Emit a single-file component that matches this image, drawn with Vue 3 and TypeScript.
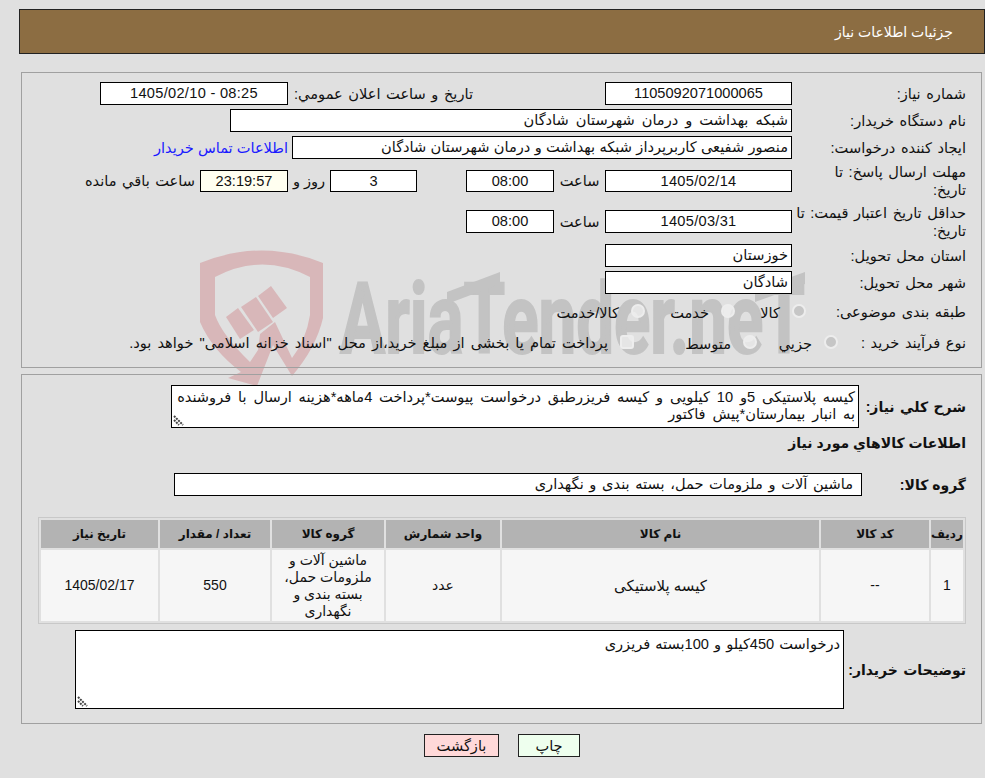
<script setup lang="ts">
const columns: string[] = ['ردیف', 'کد کالا', 'نام کالا', 'واحد شمارش', 'گروه کالا', 'تعداد / مقدار', 'تاریخ نیاز']
</script>

<template>
  <div class="page" dir="rtl">
    <svg class="watermark" width="985" height="778" viewBox="0 0 985 778" aria-hidden="true">
      <path class="shield" fill-rule="evenodd" d="M200 263Q262 238 323 263L323 318Q316 348 292 376L273 345L257 386L228 378L241 372Q212 350 200 322ZM215 277L215 315Q222 335 250 362L258 350L260 334L275 322L292 358Q306 340 310 315L310 277Q262 252 215 277Z" />
      <polygon class="shield" points="226,317 238,308 254,330 240,339" />
      <polygon class="shield" points="241,307 256,297 273,322 258,332" />
      <polygon class="shield" points="258,296 271,286 287,308 273,318" />
      <text class="logo" x="340" y="353" textLength="465" lengthAdjust="spacingAndGlyphs">AriaTender.neT</text>
      <polygon class="logo-bar" points="447,292 500,272 500,284 447,304" />
      <polygon class="logo-bar" points="755,290 805,272 805,284 755,302" />
    </svg>

    <header class="title-bar">جزئیات اطلاعات نیاز</header>

    <section class="panel main-panel">
      <div class="row h23">
        <div class="label">شماره نیاز:</div>
        <div class="box w187 center">1105092071000065</div>
        <div class="sub-label">تاریخ و ساعت اعلان عمومي:</div>
        <div class="box w188 center date">08:25 - 1405/02/10</div>
      </div>
      <div class="row h23">
        <div class="label">نام دستگاه خریدار:</div>
        <div class="box w562 spaced">شبکه بهداشت و درمان شهرستان شادگان</div>
      </div>
      <div class="row h23">
        <div class="label">ایجاد کننده درخواست:</div>
        <div class="box w500 tight">منصور شفیعی کاربرپرداز شبکه بهداشت و درمان شهرستان شادگان</div>
        <a class="contact">اطلاعات تماس خریدار</a>
      </div>
      <div class="row h36">
        <div class="label">مهلت ارسال پاسخ: تا<br />تاریخ:</div>
        <div class="box w187 center short date">1405/02/14</div>
        <div class="mid w51">ساعت</div>
        <div class="box w88 center short">08:00</div>
        <div class="box w87 center short days">3</div>
        <div class="mid w42">روز و</div>
        <div class="box w88 center short timer">23:19:57</div>
        <div class="remain">ساعت باقي مانده</div>
      </div>
      <div class="row h37">
        <div class="label">حداقل تاریخ اعتبار قیمت: تا<br />تاریخ:</div>
        <div class="box w187 center date">1405/03/31</div>
        <div class="mid w51">ساعت</div>
        <div class="box w88 center">08:00</div>
      </div>
      <div class="row h23">
        <div class="label">استان محل تحویل:</div>
        <div class="box w187">خوزستان</div>
      </div>
      <div class="row h23">
        <div class="label">شهر محل تحویل:</div>
        <div class="box w187">شادگان</div>
      </div>
      <div class="row h26 options">
        <div class="label w160">طبقه بندی موضوعی:</div>
        <input class="mark" type="radio" name="kind" checked disabled />
        <span class="opt w45">کالا</span>
        <input class="mark" type="radio" name="kind" disabled />
        <span class="opt w51b">خدمت</span>
        <input class="mark" type="radio" name="kind" disabled />
        <span class="opt">کالا/خدمت</span>
      </div>
      <div class="row h26 options">
        <div class="label w128">نوع فرآیند خرید :</div>
        <input class="mark" type="radio" name="proc" checked disabled />
        <span class="opt w47">جزیي</span>
        <input class="mark" type="radio" name="proc" disabled />
        <span class="opt w86">متوسط</span>
        <input class="mark square" type="checkbox" disabled />
        <span class="opt long">پرداخت تمام یا بخشی از مبلغ خرید،از محل "اسناد خزانه اسلامی" خواهد بود.</span>
      </div>
    </section>

    <section class="panel second-panel">
      <div class="desc-row">
        <div class="bold-label desc-label">شرح كلي نياز:</div>
        <div class="area desc-area">
          کیسه پلاستیکی 5و 10 کیلویی و کیسه فریزرطبق درخواست پیوست*پرداخت 4ماهه*هزینه ارسال با فروشنده<br />به انبار بیمارستان*پیش فاکتور
          <svg class="grip" width="11" height="11" viewBox="0 0 11 11" aria-hidden="true"><path d="M1 1L10 10M1 5L6 10" /></svg>
        </div>
      </div>
      <h2 class="bold-label goods-title">اطلاعات کالاهاي مورد نياز</h2>
      <div class="group-row">
        <div class="bold-label group-label">گروه کالا:</div>
        <div class="box group-box">ماشین آلات و ملزومات حمل، بسته بندی و نگهداری</div>
      </div>
      <table class="goods">
        <thead>
          <tr>
            <th v-for="c in columns" :key="c">{{ c }}</th>
          </tr>
        </thead>
        <tbody>
          <tr>
            <td>1</td>
            <td>--</td>
            <td class="wide">کیسه پلاستیکی</td>
            <td>عدد</td>
            <td>ماشین آلات و ملزومات حمل، بسته بندی و نگهداری</td>
            <td>550</td>
            <td>1405/02/17</td>
          </tr>
        </tbody>
      </table>
      <div class="note-row">
        <div class="bold-label note-label">توضیحات خریدار:</div>
        <div class="area note-area">
          درخواست 450کیلو و 100بسته فریزری
          <svg class="grip" width="11" height="11" viewBox="0 0 11 11" aria-hidden="true"><path d="M1 1L10 10M1 5L6 10" /></svg>
        </div>
      </div>
    </section>

    <div class="actions">
      <button class="btn print" type="button">چاپ</button>
      <button class="btn back" type="button">بازگشت</button>
    </div>
  </div>
</template>

<style>
html, body { margin: 0; background: #e0e0e0; }
</style>

<style scoped>
.page {
  position: relative;
  width: 985px;
  height: 778px;
  overflow: hidden;
  box-sizing: border-box;
  padding-top: 9px;
  background: #e0e0e0;
  color: #111;
  font-family: "Liberation Sans", "DejaVu Sans", sans-serif;
  font-size: 14.6px;
  line-height: 18px;
  word-spacing: 1.5px;
}
.watermark { position: absolute; left: 0; top: 0; }
.shield { fill: #d8b7b9; }
.logo { fill: #c3c3c3; stroke: #c3c3c3; stroke-width: 2px; font-family: Roboto, sans-serif; font-weight: 700; font-size: 98px; direction: ltr; unicode-bidi: bidi-override; word-spacing: 0; }
.logo-bar { fill: #c3c3c3; }
.title-bar {
  position: relative;
  box-sizing: border-box;
  height: 45px;
  width: 966px;
  padding-right: 31px;
  display: flex;
  align-items: center;
  background: #8c6d42;
  border: 1px solid #222;
  color: #fff;
  font-size: 14px;
  word-spacing: 0;
}
.panel {
  position: relative;
  box-sizing: border-box;
  width: 961px;
  margin-right: 3px;
  padding-right: 15px;
  border: 1px solid #a0a0a0;
}
.main-panel {
  margin-top: 18px;
  height: 296px;
  padding-top: 9px;
  display: flex;
  flex-direction: column;
  gap: 4px;
}
.row { display: flex; align-items: center; }
.h23 { height: 23px; }
.h26 { height: 27px; }
.h36 { height: 36px; }
.h37 { height: 37px; }
.label { width: 174px; flex: none; box-sizing: border-box; white-space: nowrap; }
.label.w160 { width: 160px; }
.label.w128 { width: 128px; }
.box {
  box-sizing: border-box;
  height: 23px;
  flex: none;
  padding: 0 3px;
  border: 1px solid #000;
  background: #fff;
  line-height: 21px;
  white-space: nowrap;
}
.short { height: 22px; line-height: 20px; }
.center { text-align: center; }
.date { letter-spacing: 0.3px; word-spacing: 0; }
.spaced { word-spacing: 3px; }
.tight { word-spacing: 0.3px; }
.w187 { width: 187px; }
.w188 { width: 188px; }
.w562 { width: 562px; }
.w500 { width: 500px; }
.w88 { width: 88px; }
.w87 { width: 87px; }
.sub-label { width: 185px; flex: none; margin-right: 132px; white-space: nowrap; }
.contact { margin-right: 4px; color: #1a1aff; white-space: nowrap; word-spacing: 0; }
.mid { flex: none; text-align: center; word-spacing: 0; }
.w51 { width: 51px; }
.w42 { width: 42px; }
.days { margin-right: 49px; }
.timer { background: #fffff0; }
.remain { margin-right: 5px; white-space: nowrap; }
.mark {
  appearance: none;
  flex: none;
  box-sizing: border-box;
  width: 14px;
  height: 14px;
  margin: 0 0 2px;
  border: 2px solid #ededed;
  border-radius: 50%;
  background: rgba(240, 240, 240, 0.75);
}
.mark:checked { background: #c6c6c6; }
.mark.square { border-radius: 3px; }
.opt { margin-right: 12px; padding-top: 3px; white-space: nowrap; flex: none; }
.opt.long { word-spacing: 2px; padding-top: 1px; }
.w45 { width: 20px; margin-left: 25px; }
.w51b { width: 40px; margin-left: 24px; }
.w47 { width: 35px; margin-left: 20px; }
.w86 { width: 45px; margin-left: 52px; }
.second-panel {
  margin-top: 6px;
  height: 350px;
  padding-top: 10px;
}
.bold-label { font-weight: 700; font-size: 14px; margin: 0; white-space: nowrap; }
.desc-row { display: flex; align-items: center; }
.desc-label { width: 107px; flex: none; }
.area {
  position: relative;
  box-sizing: border-box;
  flex: none;
  border: 1px solid #000;
  background: #fff;
  padding: 2px 3px;
  overflow: hidden;
}
.grip { position: absolute; left: 1px; bottom: 1px; }
.grip path { fill: none; stroke: #444; stroke-width: 2px; stroke-dasharray: 2 1; }
.desc-area { width: 688px; height: 43px; line-height: 17px; padding-top: 3px; word-spacing: 2.8px; }
.goods-title { margin-top: 3px; height: 24px; line-height: 24px; word-spacing: 0; }
.group-row { display: flex; align-items: center; margin-top: 18px; }
.group-label { width: 104px; flex: none; word-spacing: 0; }
.group-box { width: 688px; padding-right: 8px; word-spacing: 1.6px; }
.goods {
  box-sizing: border-box;
  width: 928px;
  height: 107px;
  margin-top: 21px;
  border: 1px solid #c8c8c8;
  border-collapse: separate;
  border-spacing: 2px;
  table-layout: fixed;
  font-size: 14px;
  word-spacing: 0;
}
.goods th {
  height: 28px;
  padding: 0;
  background: #b3b3b3;
  font-size: 12px;
  font-weight: 700;
  color: #111;
}
.goods td {
  padding: 0 4px;
  background: #f6f6f6;
  text-align: center;
  line-height: 17px;
}
.goods td.wide { font-size: 15px; }
.goods th:nth-child(1) { width: 32px; }
.goods th:nth-child(2) { width: 108px; }
.goods th:nth-child(3) { width: 317px; }
.goods th:nth-child(4) { width: 114px; }
.goods th:nth-child(5) { width: 112px; }
.goods th:nth-child(6) { width: 110px; }
.note-row { display: flex; align-items: center; margin-top: 6px; }
.note-label { width: 122px; flex: none; }
.note-area { width: 769px; height: 79px; padding: 4px 3px; word-spacing: 1px; }
.actions {
  position: relative;
  box-sizing: border-box;
  display: flex;
  gap: 19px;
  margin-top: 10px;
  padding-right: 405px;
}
.btn {
  box-sizing: border-box;
  height: 23px;
  padding: 0;
  border: 1px solid #222;
  color: #111;
  font: inherit;
}
.back { width: 75px; background: #ffd9d9; }
.print { width: 62px; background: #eeffee; }
</style>
